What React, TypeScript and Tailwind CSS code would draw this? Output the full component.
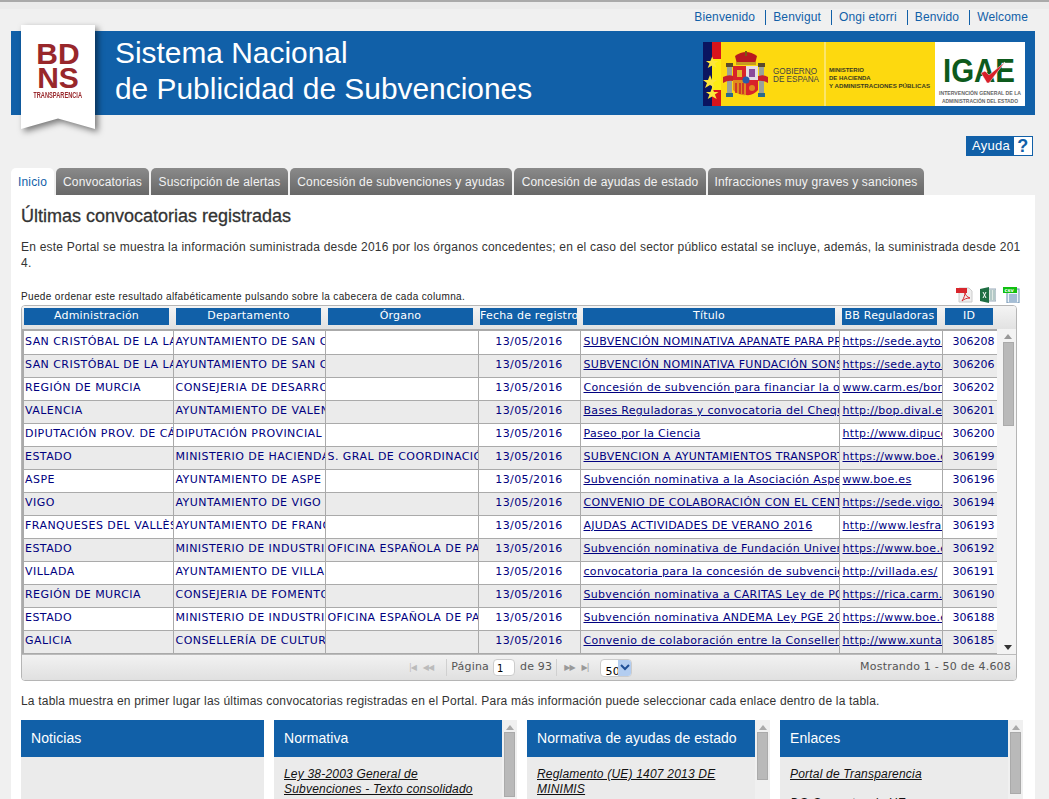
const langs = ["Bienvenido", "Benvigut", "Ongi etorri", "Benvido", "Welcome"];

const tabs = [
  { label: "Convocatorias", cls: "w-[93px]" },
  { label: "Suscripción de alertas", cls: "w-[137px]" },
  { label: "Concesión de subvenciones y ayudas", cls: "w-[222px]" },
  { label: "Concesión de ayudas de estado", cls: "w-[192px]" },
  { label: "Infracciones muy graves y sanciones", cls: "w-[216px]" },
];

const columns = [
  { label: "Administración", head: "w-[152px]", col: "w-[149px]", band: "w-[145px]" },
  { label: "Departamento", head: "w-[152px]", col: "w-[152px]", band: "w-[145px]" },
  { label: "Órgano", head: "w-[152px]", col: "w-[153px]", band: "w-[145px]" },
  { label: "Fecha de registro", head: "w-[103px]", col: "w-[102px]", band: "w-[97px]" },
  { label: "Título", head: "w-[259px]", col: "w-[259px]", band: "w-[252px]" },
  { label: "BB Reguladoras", head: "w-[103px]", col: "w-[103px]", band: "w-[95px]" },
  { label: "ID", head: "w-[55px]", col: "w-[55px]", band: "w-[48px]" },
];

const rows = [
  ["SAN CRISTÓBAL DE LA LAGUNA", "AYUNTAMIENTO DE SAN CRISTÓBAL", "", "SUBVENCIÓN NOMINATIVA APANATE PARA PROYECTO", "https://sede.ayto.es", "306208"],
  ["SAN CRISTÓBAL DE LA LAGUNA", "AYUNTAMIENTO DE SAN CRISTÓBAL", "", "SUBVENCIÓN NOMINATIVA FUNDACIÓN SONSOLES", "https://sede.ayto.es", "306206"],
  ["REGIÓN DE MURCIA", "CONSEJERIA DE DESARROLLO", "", "Concesión de subvención para  financiar la organización", "www.carm.es/borm", "306202"],
  ["VALENCIA", "AYUNTAMIENTO DE VALENCIA", "", "Bases Reguladoras y convocatoria del Cheque Escolar", "http://bop.dival.es", "306201"],
  ["DIPUTACIÓN PROV. DE CÁCERES", "DIPUTACIÓN PROVINCIAL DE", "", "Paseo por la Ciencia", "http://www.dipucc.es", "306200"],
  ["ESTADO", "MINISTERIO DE HACIENDA Y", "S. GRAL DE COORDINACIÓN", "SUBVENCION A AYUNTAMIENTOS TRANSPORTE", "https://www.boe.es", "306199"],
  ["ASPE", "AYUNTAMIENTO DE ASPE", "", "Subvención nominativa a la Asociación Aspe", "www.boe.es", "306196"],
  ["VIGO", "AYUNTAMIENTO DE VIGO", "", "CONVENIO DE COLABORACIÓN CON EL CENTRO", "https://sede.vigo.org", "306194"],
  ["FRANQUESES DEL VALLÈS, LES", "AYUNTAMIENTO DE FRANQUESES", "", "AJUDAS ACTIVIDADES DE VERANO 2016", "http://www.lesfranqueses", "306193"],
  ["ESTADO", "MINISTERIO DE INDUSTRIA", "OFICINA ESPAÑOLA DE PATENTES", "Subvención nominativa de Fundación Universidad", "https://www.boe.es", "306192"],
  ["VILLADA", "AYUNTAMIENTO DE VILLADA", "", "convocatoria para la concesión de subvenciones", "http://villada.es/", "306191"],
  ["REGIÓN DE MURCIA", "CONSEJERIA DE FOMENTO", "", "Subvención nominativa a CARITAS Ley de PGE", "https://rica.carm.es", "306190"],
  ["ESTADO", "MINISTERIO DE INDUSTRIA", "OFICINA ESPAÑOLA DE PATENTES", "Subvención nominativa ANDEMA Ley PGE 2016", "https://www.boe.es", "306188"],
  ["GALICIA", "CONSELLERÍA DE CULTURA", "", "Convenio de colaboración entre la Consellería", "http://www.xunta.es", "306185"],
];

const panels = [
  { title: "Noticias", links: [], scroll: false },
  { title: "Normativa", links: ["Ley 38-2003 General de Subvenciones - Texto consolidado"], scroll: true, thumb: "h-[65px]" },
  { title: "Normativa de ayudas de estado", links: ["Reglamento (UE) 1407 2013 DE MINIMIS"], scroll: true, thumb: "h-[48px]" },
  { title: "Enlaces", links: ["Portal de Transparencia", "DG Competencia UE"], scroll: true, thumb: "h-[62px]" },
];

function BdnsLogo() {
  return (
    <div className="absolute left-[10px] top-[-6px] drop-shadow-[3px_3px_3px_rgba(0,0,0,0.5)]">
      <div className="flex h-[104px] w-[74px] flex-col items-center bg-white pt-[16px] font-bold text-[#98272b] [clip-path:polygon(0_0,100%_0,100%_100%,50%_90%,0_100%)]">
        <div className="text-[30px] leading-[25px]">BD</div>
        <div className="text-[30px] leading-[23px]">NS</div>
        <div className="mt-[2px] scale-x-[0.63] whitespace-nowrap text-[9px] leading-[9px]">TRANSPARENCIA</div>
      </div>
    </div>
  );
}

function GovLogo() {
  return (
    <svg width="322" height="64" viewBox="0 0 322 64" className="mt-[2px] shrink-0">
      <rect width="232" height="64" fill="#fdd90f" />
      <rect width="9" height="64" fill="#0b1560" />
      <rect x="9" width="9" height="17" fill="#d8141c" />
      <rect x="9" y="17" width="9" height="31" fill="#fdeb12" />
      <rect x="9" y="48" width="9" height="16" fill="#d8141c" />
      <polygon points="8,16 10,21 15,21 11,24 13,29 8,26 3,29 5,24 1,21 6,21" fill="#fde73a" transform="translate(2,0) scale(.9)" />
      <polygon points="8,16 10,21 15,21 11,24 13,29 8,26 3,29 5,24 1,21 6,21" fill="#fde73a" transform="translate(-1,17)" />
      <polygon points="8,16 10,21 15,21 11,24 13,29 8,26 3,29 5,24 1,21 6,21" fill="#fde73a" transform="translate(2,31) scale(.9)" />
      <rect x="121" width="2" height="64" fill="#fbe56a" />
      {/* escudo */}
      <g transform="translate(-3,0)">
        <rect x="27" y="25" width="5" height="26" fill="#9aa29a" />
        <rect x="26" y="21" width="7" height="4" fill="#5b4a2a" />
        <rect x="26" y="51" width="7" height="4" fill="#2a6a8a" />
        <rect x="59" y="25" width="5" height="26" fill="#9aa29a" />
        <rect x="58" y="21" width="7" height="4" fill="#5b4a2a" />
        <rect x="58" y="51" width="7" height="4" fill="#2a6a8a" />
        <path d="M23 35 q8 -4 14 1 l0 4 q-8 -3 -14 1z" fill="#c8202a" />
        <path d="M54 36 q8 -5 14 -1 l0 6 q-7 -4 -14 -1z" fill="#c8202a" />
        <path d="M35 14 q11 -8 22 0 l-2 8 h-18z" fill="#b8181f" />
        <rect x="36" y="20" width="20" height="3" fill="#c79a20" />
        <rect x="45" y="9" width="2" height="5" fill="#7a5a10" />
        <path d="M33 24 h13 v14 h-13z" fill="#d8232a" />
        <path d="M46 24 h12 v14 h-12z" fill="#e4dce4" />
        <path d="M33 38 h13 v15 q-7 1 -13 -5z" fill="#e08a1e" />
        <path d="M46 38 h12 v10 q-5 6 -12 5z" fill="#d8232a" />
        <path d="M36 41 v10 M40 41 v11 M43 41 v11" stroke="#c8202a" strokeWidth="1.5" />
        <rect x="37" y="28" width="5" height="7" fill="#e4b52a" />
        <rect x="49" y="27" width="6" height="8" fill="#8a4a9a" />
        <circle cx="46" cy="38" r="3.5" fill="#2a5aa8" />
        <circle cx="52" cy="46" r="3" fill="#e08a1e" />
      </g>
      <text x="70" y="32" fontFamily="Liberation Sans" fontSize="8.5" fill="#444" textLength="44" lengthAdjust="spacingAndGlyphs">GOBIERNO</text>
      <text x="70" y="40" fontFamily="Liberation Sans" fontSize="8.5" fill="#444" textLength="46" lengthAdjust="spacingAndGlyphs">DE ESPAÑA</text>
      <g fontFamily="Liberation Sans" fontSize="6" fontWeight="bold" fill="#3a3a20">
        <text x="126" y="30">MINISTERIO</text>
        <text x="126" y="38">DE HACIENDA</text>
        <text x="126" y="46" textLength="101" lengthAdjust="spacingAndGlyphs">Y ADMINISTRACIONES PÚBLICAS</text>
      </g>
      <rect x="232" width="90" height="64" fill="#fff" />
      <text x="240" y="40" fontFamily="Liberation Sans" fontSize="34" fontWeight="bold" fill="#0d5a1c" textLength="72" lengthAdjust="spacingAndGlyphs">IGAE</text>
      <path d="M278 31 l6 10 h2 l16 -21 l-16 13 l-4 -4z" fill="#d8202a" stroke="#fff" strokeWidth="0.5" />
      <g fontFamily="Liberation Sans" fontSize="5" fontWeight="bold" fill="#666">
        <text x="236" y="53" textLength="82" lengthAdjust="spacingAndGlyphs">INTERVENCIÓN GENERAL DE LA</text>
        <text x="239" y="61" textLength="76" lengthAdjust="spacingAndGlyphs">ADMINISTRACIÓN DEL ESTADO</text>
      </g>
    </svg>
  );
}

function ExportIcons() {
  return (
    <div className="flex items-center gap-[7px]">
      <svg width="17" height="16" viewBox="0 0 17 16">
        <path d="M3 1h10l3 3v11H3z" fill="#eee" stroke="#ccc" />
        <rect y="1" width="11" height="5" fill="#d8262c" />
        <path d="M6 14c2-3 3-6 3-9 0 3 2 5 5 6-3 0-6 1-8 3z" fill="none" stroke="#d8262c" />
      </svg>
      <svg width="16" height="16" viewBox="0 0 16 16">
        <rect x="6" y="2" width="10" height="12" fill="#dfe8e2" stroke="#9ab" />
        <path d="M0 2l9-2v16l-9-2z" fill="#1f6e43" />
        <path d="M3 5l3 6M6 5l-3 6" stroke="#fff" />
        <path d="M11 3v10M14 3v10" stroke="#8aa" />
      </svg>
      <svg width="17" height="16" viewBox="0 0 17 16">
        <rect x="4" y="2" width="12" height="14" fill="#eef4fa" stroke="#6a8fb0" />
        <path d="M6 8h8M6 10h8M6 12h8M6 14h8" stroke="#5a86b0" />
        <rect width="14" height="6" fill="#10c010" />
        <text x="1.5" y="5" fontFamily="DejaVu Sans" fontSize="5" fontWeight="bold" fill="#fff">csv</text>
      </svg>
    </div>
  );
}

function Scrollbar({ thumb }: { thumb: string }) {
  return (
    <div className="flex w-[15px] shrink-0 flex-col items-center bg-[#f0f0f0]">
      <div className="mt-[5px] h-0 w-0 border-x-[4px] border-b-[5px] border-x-transparent border-b-[#aaa]" />
      <div className={`mt-[2px] w-[11px] border border-[#aaa] bg-[#b9b9b9] ${thumb}`} />
    </div>
  );
}

function DataGrid() {
  return (
    <div className="h-[376px] overflow-hidden rounded-[4px] border border-[#b5b5b5] font-['DejaVu_Sans',sans-serif] text-[11px]">
      <div className="flex h-[23px] bg-linear-to-b from-[#f4f4f4] to-[#e2e2e2] tracking-[0.2px]">
        {columns.map((c) => (
          <div key={c.label} className={`flex shrink-0 pt-[2px] pl-[2px] ${c.head}`}>
            <div className={`h-[17px] overflow-hidden whitespace-nowrap bg-[#1160a8] text-center leading-[15px] text-white ${c.band}`}>
              {c.label}
            </div>
          </div>
        ))}
      </div>
      <div className="flex h-[325px]">
        <div className="w-[975px] overflow-hidden border-t-2 border-l-2 border-[#aaa]">
          <table className="w-[973px] table-fixed border-collapse">
            <colgroup>
              {columns.map((c) => (
                <col key={c.label} className={c.col} />
              ))}
            </colgroup>
            <tbody>
              {rows.map((r, i) => (
                <tr key={r[5]} className={`h-[23px] text-[#00007f] ${i % 2 ? "bg-[#ebebeb]" : "bg-white"}`}>
                  {r.slice(0, 3).map((v, j) => (
                    <td key={j} className={`overflow-hidden whitespace-nowrap border-r border-b border-[#aaa] tracking-[0.45px] ${j ? "pl-[2px]" : "pl-[1px]"}`}>
                      {v}
                    </td>
                  ))}
                  <td className="border-r border-b border-[#aaa] text-center tracking-[0.4px]">13/05/2016</td>
                  <td className="overflow-hidden whitespace-nowrap border-r border-b border-[#aaa] pl-[3px] tracking-[0.3px] underline">
                    {r[3]}
                  </td>
                  <td className="overflow-hidden whitespace-nowrap border-r border-b border-[#aaa] pl-[3px] tracking-[0.3px] underline">
                    {r[4]}
                  </td>
                  <td className="border-r border-b border-[#aaa] pr-[2px] text-right">{r[5]}</td>
                </tr>
              ))}
            </tbody>
          </table>
        </div>
        <div className="flex h-full flex-1 flex-col items-center bg-[#f3f3f3] pl-[3px]">
          <div className="mt-[5px] h-0 w-0 border-x-[4px] border-b-[5px] border-x-transparent border-b-[#999]" />
          <div className="mt-[3px] h-[84px] w-[11px] border border-[#aaa] bg-[#b9b9b9]" />
          <div className="mt-auto mb-[4px] h-0 w-0 border-x-[4px] border-t-[5px] border-x-transparent border-t-[#333]" />
        </div>
      </div>
      <div className="flex h-[26px] items-center border-t border-[#bbb] bg-linear-to-b from-[#f2f2f2] to-[#e0e0e0] pr-[5px] tracking-[0.2px] text-[#555]">
        <div className="ml-[387px] flex items-center gap-[7px] text-[8px] tracking-[-1px] text-[#bbb]">
          <span>|◀</span>
          <span>◀◀</span>
        </div>
        <span className="ml-[13px] border-l border-[#d0d0d0] pl-[4px]">Página</span>
        <div className="ml-[4px] h-[17px] w-[22px] rounded-[4px] border border-[#ccc] bg-white pl-[3px] text-[10px] leading-[18px] text-black">1</div>
        <span className="ml-[5px] border-r border-[#d0d0d0] pr-[4px]">de 93</span>
        <div className="ml-[7px] flex items-center gap-[7px] text-[8px] tracking-[-1px] text-[#999]">
          <span>▶▶</span>
          <span>▶|</span>
        </div>
        <div className="ml-[12px] flex h-[18px] w-[32px] overflow-hidden rounded-[4px] border border-[#ccc] bg-white">
          <span className="w-[17px] pt-[5px] pl-[4px] text-[11px] leading-[14px] text-black">50</span>
          <span className="flex flex-1 items-center justify-center bg-[#b3cdf0] text-[9px] font-bold text-[#1f4f96]">
            <svg width="10" height="7" viewBox="0 0 10 7"><path d="M1 1l4 4 4-4" fill="none" stroke="#1f4f96" strokeWidth="2" /></svg>
          </span>
        </div>
        <span className="ml-auto">Mostrando 1 - 50 de 4.608</span>
      </div>
    </div>
  );
}

export default function App() {
  return (
    <div className="h-[799px] w-[1049px] overflow-hidden bg-[#f0f0f0] font-['Liberation_Sans',Arial,sans-serif] text-[#333]">
      <div className="h-[9px] border-t-2 border-[#aaa] bg-[#ebebeb]" />

      <div className="flex h-[22px] items-start justify-end pt-[1px] pr-[21px] text-[12px] tracking-[0.15px] text-[#1160a8]">
        {langs.map((l, i) => (
          <span key={l} className={`h-[15px] leading-[14px] ${i ? "ml-[10px] border-l border-[#1160a8] pl-[7px]" : ""}`}>
            {l}
          </span>
        ))}
      </div>

      <div className="relative mr-[14px] ml-[11px] flex h-[84px] items-center bg-[#1160a8] pr-[10px] pl-[104px] text-white">
        <BdnsLogo />
        <div className="flex-1 pb-[4px] text-[29.9px] leading-[36px]">
          Sistema Nacional
          <br />
          de Publicidad de Subvenciones
        </div>
        <GovLogo />
      </div>

      <div className="flex h-[53px] justify-end pt-[21px] pr-[16px]">
        <div className="flex h-[20px] w-[67px] items-center justify-between bg-[#1160a8] pr-[1px] pl-[6px] text-[13px] tracking-[0.3px] text-white">
          Ayuda
          <span className="flex h-[18px] w-[18px] items-center justify-center bg-white text-[18px] font-bold text-[#1160a8]">?</span>
        </div>
      </div>

      <div className="ml-[11px] flex h-[27px] gap-[2px] text-[12px] tracking-[0.18px]">
        <div className="flex w-[43px] items-center justify-center rounded-t-[5px] bg-white text-[#1160a8]">Inicio</div>
        {tabs.map((t) => (
          <div key={t.label} className={`flex items-center justify-center whitespace-nowrap rounded-t-[5px] bg-linear-to-b from-[#8a8a8a] to-[#686868] text-[#f2f2f2] ${t.cls}`}>
            {t.label}
          </div>
        ))}
      </div>

      <div className="mr-[14px] ml-[11px] h-[604px] bg-white px-[10px]">
        <h1 className="pt-[10px] text-[18px] leading-[22px] text-[#333] [-webkit-text-stroke:0.3px_#333]">Últimas convocatorias registradas</h1>
        <p className="mt-[12px] h-[32px] w-[1002px] break-all text-[12px] leading-[16px] tracking-[0.22px]">
          En este Portal se muestra la información suministrada desde 2016 por los órganos concedentes; en el caso del sector público estatal se incluye, además, la suministrada desde 2014.
        </p>

        <div className="mt-[12px] flex h-[20px] items-end justify-between pr-[5px]">
          <span className="text-[10px] leading-[13px] tracking-[0.36px] text-[#222]">
            Puede ordenar este resultado alfabéticamente pulsando sobre la cabecera de cada columna.
          </span>
          <ExportIcons />
        </div>

        <div className="mt-[2px] w-[996px]">
          <DataGrid />
        </div>

        <p className="mt-[13px] text-[12px] leading-[14px] tracking-[0.19px]">
          La tabla muestra en primer lugar las últimas convocatorias registradas en el Portal. Para más información puede seleccionar cada enlace dentro de la tabla.
        </p>

        <div className="mt-[12px] flex gap-[10px]">
          {panels.map((p) => (
            <div key={p.title} className="flex h-[120px] w-[243px] bg-[#ebebeb]">
              <div className="min-w-0 flex-1">
                <div className="flex h-[37px] items-center bg-[#1160a8] pl-[10px] text-[14px] tracking-[0.07px] text-white">{p.title}</div>
                <div className="flex flex-col gap-[14px] px-[10px] pt-[10px] text-[12px] italic leading-[15px] tracking-[0.2px] text-[#111] underline">
                  {p.links.map((l) => (
                    <span key={l}>{l}</span>
                  ))}
                </div>
              </div>
              {p.scroll && <Scrollbar thumb={p.thumb ?? ""} />}
            </div>
          ))}
        </div>
      </div>
    </div>
  );
}
